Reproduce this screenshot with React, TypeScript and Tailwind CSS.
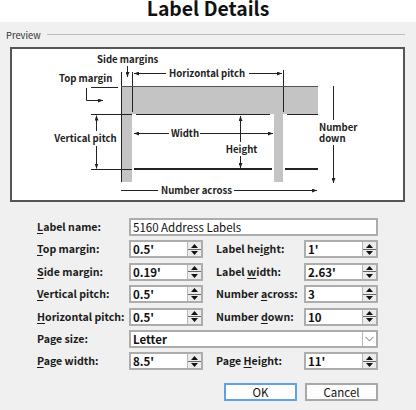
import React from "react";

function Spin({ v }: { v: string }) {
  return (
    <div className="flex h-[18px] border-2 border-[#adadad] bg-white">
      <div className="flex-1 pl-[2px] text-[11.5px] leading-[14px] font-semibold text-[#111] whitespace-nowrap">
        {v}
      </div>
      <div className="w-[14px] flex flex-col border-l border-[#b8b8b8] bg-[#ececec]">
        <div className="flex-1 flex items-center justify-center border-b border-[#666]">
          <svg width="7" height="4" viewBox="0 0 7 4">
            <path d="M0 4 L3.5 0 L7 4z" fill="#111" />
          </svg>
        </div>
        <div className="flex-1 flex items-center justify-center">
          <svg width="7" height="4" viewBox="0 0 7 4">
            <path d="M0 0 L3.5 4 L7 0z" fill="#111" />
          </svg>
        </div>
      </div>
    </div>
  );
}

function Lbl({ pre, u, post, right }: { pre: string; u?: string; post?: string; right?: boolean }) {
  return (
    <div
      className={
        "h-[18px] flex items-center text-[10.6px] leading-[18px] font-bold text-[#1a1a1a] whitespace-nowrap" +
        (right ? " pl-[13px]" : "")
      }
    >
      <span>
        {pre}
        {u ? <span className="underline underline-offset-[2px] decoration-1">{u}</span> : null}
        {post}
      </span>
    </div>
  );
}

function Diagram() {
  const txt = { fontSize: 9.6, fontWeight: 600, fill: "#222" } as const;
  return (
    <svg width="391" height="151" viewBox="12 49 391 151" className="block">
      <defs>
        <marker
          id="ah"
          viewBox="0 0 10 8"
          refX="10"
          refY="4"
          markerWidth="5"
          markerHeight="4"
          markerUnits="userSpaceOnUse"
          orient="auto"
        >
          <path d="M0,0 L10,4 L0,8 z" fill="#222" />
        </marker>
      </defs>
      <g fill="#c4c4c4">
        <rect x="121" y="86" width="197" height="28" />
        <rect x="121" y="86" width="11" height="96" />
        <rect x="274" y="110" width="9" height="72" />
      </g>
      <g fill="#fff">
        <rect x="132" y="114" width="142" height="55" rx="4" />
        <rect x="132" y="169" width="142" height="40" rx="4" />
        <rect x="283" y="114" width="60" height="55" rx="4" />
        <rect x="283" y="169" width="60" height="40" rx="4" />
      </g>
      <g stroke="#222" strokeWidth="1" fill="none">
        <line x1="121.5" y1="72" x2="121.5" y2="182" />
        <line x1="132.5" y1="72" x2="132.5" y2="112" />
        <line x1="283.5" y1="70" x2="283.5" y2="112" />
        <line x1="121" y1="86.5" x2="318" y2="86.5" stroke="#555" />
        <line x1="91" y1="87.5" x2="118" y2="87.5" />
        <line x1="136" y1="114.5" x2="270" y2="114.5" />
        <line x1="287" y1="114.5" x2="318" y2="114.5" />
        <line x1="134" y1="169" x2="272" y2="169" strokeWidth="2" />
        <line x1="285" y1="169" x2="318" y2="169" strokeWidth="2" />
        <path d="M86.5 88 V100.5 H103" markerEnd="url(#ah)" />
        <line x1="127.5" y1="66" x2="127.5" y2="77" markerEnd="url(#ah)" />
        <line x1="166" y1="73.5" x2="134" y2="73.5" markerEnd="url(#ah)" />
        <line x1="249" y1="73.5" x2="282" y2="73.5" markerEnd="url(#ah)" />
        <line x1="91" y1="114.5" x2="132" y2="114.5" />
        <line x1="91" y1="169.5" x2="132" y2="169.5" />
        <line x1="96.5" y1="131" x2="96.5" y2="115.5" markerEnd="url(#ah)" />
        <line x1="96.5" y1="146" x2="96.5" y2="168.5" markerEnd="url(#ah)" />
        <line x1="169" y1="133.5" x2="134" y2="133.5" markerEnd="url(#ah)" />
        <line x1="200" y1="133.5" x2="273" y2="133.5" markerEnd="url(#ah)" />
        <line x1="240.5" y1="142" x2="240.5" y2="116" markerEnd="url(#ah)" />
        <line x1="240.5" y1="156" x2="240.5" y2="168" markerEnd="url(#ah)" />
        <line x1="333.5" y1="86" x2="333.5" y2="120" />
        <line x1="333.5" y1="145" x2="333.5" y2="183" markerEnd="url(#ah)" />
        <line x1="121" y1="190.5" x2="158" y2="190.5" />
        <line x1="234" y1="190.5" x2="317" y2="190.5" markerEnd="url(#ah)" />
      </g>
      <g style={{ fontFamily: "'Noto Sans CJK SC', 'Noto Sans', sans-serif" }}>
        <text x="97" y="62.5" {...txt}>Side margins</text>
        <text x="59" y="81.5" {...txt}>Top margin</text>
        <text x="169" y="76.5" {...txt}>Horizontal pitch</text>
        <text x="85.5" y="141.5" textAnchor="middle" {...txt}>Vertical pitch</text>
        <text x="171" y="136.5" {...txt}>Width</text>
        <text x="241.5" y="152.5" textAnchor="middle" {...txt}>Height</text>
        <text x="319" y="130.5" {...txt}>Number</text>
        <text x="319" y="141.8" {...txt}>down</text>
        <text x="161" y="193.5" {...txt}>Number across</text>
      </g>
    </svg>
  );
}

export default function App() {
  return (
    <div className="w-[416px] h-[410px] bg-[#f0f0f0] overflow-hidden font-['Noto_Sans_CJK_SC','Noto_Sans',sans-serif] text-[#1a1a1a]">
      <div className="h-[22px] bg-white text-center text-[19.4px] leading-[15px] font-bold text-[#111]">
        Label Details
      </div>
      <div className="h-[25px] flex items-center pl-[6px] pr-[11px] gap-[6px]">
        <span className="text-[9.3px] leading-[12px] text-[#333]">Preview</span>
        <div className="flex-1 h-px bg-[#bdbdbd]" />
      </div>
      <div className="ml-[10px] w-[395px] h-[155px] border-2 border-[#555] bg-white">
        <Diagram />
      </div>
      <div className="mt-[16px] pl-[37px] grid grid-cols-[92px_74px_101px_74px] auto-rows-[18px] gap-y-[4.4px]">
        <Lbl pre="" u="L" post="abel name:" />
        <div className="col-span-3 h-[18px] border-2 border-[#adadad] bg-white pl-[2px] text-[11.5px] leading-[14px] text-[#111]">
          5160 Address Labels
        </div>

        <Lbl pre="" u="T" post="op margin:" />
        <Spin v="0.5'" />
        <Lbl pre="Label he" u="i" post="ght:" right />
        <Spin v="1'" />

        <Lbl pre="" u="S" post="ide margin:" />
        <Spin v="0.19'" />
        <Lbl pre="Label " u="w" post="idth:" right />
        <Spin v="2.63'" />

        <Lbl pre="" u="V" post="ertical pitch:" />
        <Spin v="0.5'" />
        <Lbl pre="Number " u="a" post="cross:" right />
        <Spin v="3" />

        <Lbl pre="" u="H" post="orizontal pitch:" />
        <Spin v="0.5'" />
        <Lbl pre="Number " u="d" post="own:" right />
        <Spin v="10" />

        <Lbl pre="Page size:" />
        <div className="col-span-3 h-[18px] flex border-2 border-[#adadad] bg-white">
          <div className="flex-1 pl-[2px] text-[11.5px] leading-[14px] font-semibold text-[#111]">Letter</div>
          <div className="w-[14px] flex items-center justify-center border-l border-[#b8b8b8]">
            <svg width="9" height="6" viewBox="0 0 9 6">
              <path d="M0.5 0.8 L4.5 5 L8.5 0.8" stroke="#777" strokeWidth="1" fill="none" />
            </svg>
          </div>
        </div>

        <Lbl pre="" u="P" post="age width:" />
        <Spin v="8.5'" />
        <Lbl pre="Page " u="H" post="eight:" right />
        <Spin v="11'" />
      </div>
      <div className="mt-[12.6px] flex justify-end gap-[8px] pr-[38px]">
        <button className="w-[73px] h-[18px] border-2 border-[#5ea2e4] bg-[#fdfdfd] text-[11.5px] leading-[14px] text-[#111]">
          OK
        </button>
        <button className="w-[73px] h-[18px] border-2 border-[#a8a8a8] bg-[#fdfdfd] text-[11.5px] leading-[14px] text-[#111]">
          Cancel
        </button>
      </div>
    </div>
  );
}
